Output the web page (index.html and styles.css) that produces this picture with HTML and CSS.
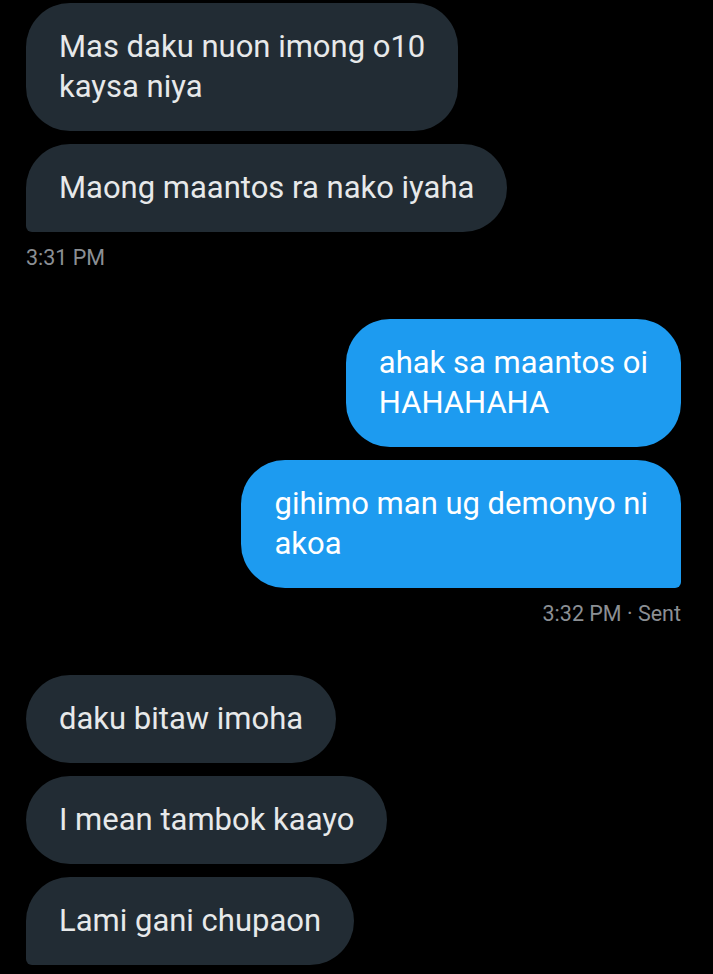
FILE: index.html
```html
<!DOCTYPE html>
<html lang="en">

<head>
    <meta charset="UTF-8">
    <meta name="viewport" content="width=device-width, initial-scale=1.0">
    <title>Messages</title>

    <link rel="stylesheet" href="styles.css">
</head>

<body>
    <div class="chat">
        <div class="group received">
            <div class="bubble">Mas daku nuon imong o10<br>kaysa niya</div>
            <div class="bubble last">Maong maantos ra nako iyaha</div>
            <div class="time">3:31 PM</div>
        </div>

        <div class="group sent">
            <div class="bubble">ahak sa maantos oi<br>HAHAHAHA</div>
            <div class="bubble last">gihimo man ug demonyo ni<br>akoa</div>
            <div class="time">3:32 PM · Sent</div>
        </div>

        <div class="group received">
            <div class="bubble">daku bitaw imoha</div>
            <div class="bubble">I mean tambok kaayo</div>
            <div class="bubble last">Lami gani chupaon</div>
        </div>
    </div>
</body>

</html>
```

FILE: styles.css
```css
html {
    height: 100%;
}

body {
    margin: 0;
    padding: 0;
    background: #000;
    font-family: Roboto, "Noto Sans", sans-serif;
}

.chat {
    display: flex;
    flex-direction: column;
    gap: 48px;
    padding: 3px 32px 0 26px;
}

.group {
    display: flex;
    flex-direction: column;
    gap: 13px;
}

.group.received {
    align-items: flex-start;
}

.group.sent {
    align-items: flex-end;
}

.bubble {
    padding: 24px 33px;
    font-size: 31px;
    line-height: 40px;
    white-space: nowrap;
    border-radius: 44px;
}

.received .bubble {
    background: #222c34;
    color: #e7e9ea;
}

.sent .bubble {
    background: #1d9bf0;
    color: #fff;
}

.received .bubble.last {
    border-bottom-left-radius: 6px;
}

.sent .bubble.last {
    border-bottom-right-radius: 6px;
}

.time {
    margin-top: 0;
    font-size: 21.5px;
    line-height: 26px;
    color: #8b8f94;
}
```
